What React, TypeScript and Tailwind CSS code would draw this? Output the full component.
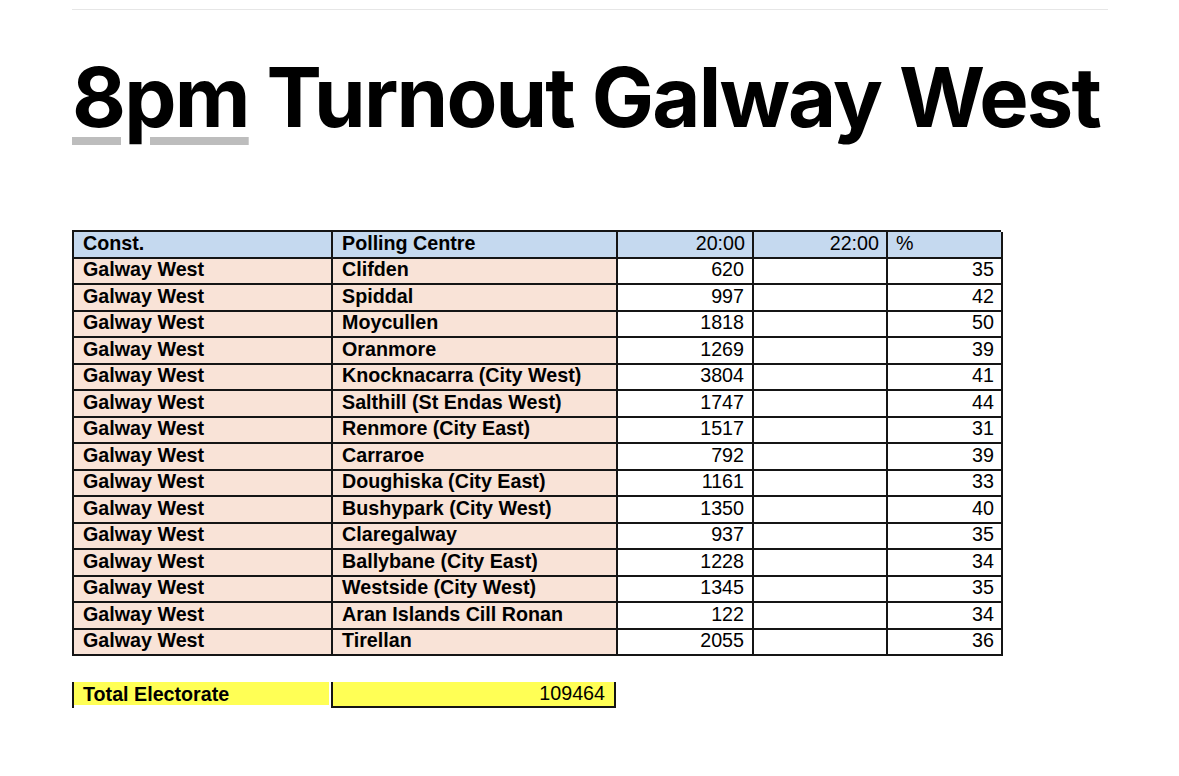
import React from "react";

const rows: [string, string, string, string][] = [
  ["Galway West", "Clifden", "620", "35"],
  ["Galway West", "Spiddal", "997", "42"],
  ["Galway West", "Moycullen", "1818", "50"],
  ["Galway West", "Oranmore", "1269", "39"],
  ["Galway West", "Knocknacarra (City West)", "3804", "41"],
  ["Galway West", "Salthill (St Endas West)", "1747", "44"],
  ["Galway West", "Renmore (City East)", "1517", "31"],
  ["Galway West", "Carraroe", "792", "39"],
  ["Galway West", "Doughiska (City East)", "1161", "33"],
  ["Galway West", "Bushypark (City West)", "1350", "40"],
  ["Galway West", "Claregalway", "937", "35"],
  ["Galway West", "Ballybane (City East)", "1228", "34"],
  ["Galway West", "Westside (City West)", "1345", "35"],
  ["Galway West", "Aran Islands Cill Ronan", "122", "34"],
  ["Galway West", "Tirellan", "2055", "36"],
];

const cell =
  "h-[26.5px] border-r-2 border-b-2 border-[#151515] flex items-center pb-[1.5px] leading-none";

export default function App() {
  return (
    <div className="w-[1179px] h-[776px] bg-white overflow-hidden pl-[72px] text-black">
      <div className="pt-[9px]">
        <div className="w-[1036px] h-px bg-[#e6e6e6]" />
      </div>
      <h1
        className="mt-[46px] text-[83px] leading-none font-bold tracking-[-1.8px] whitespace-nowrap"
        style={{ fontFamily: "Inter, 'Noto Sans', sans-serif" }}
      >
        <span className="underline decoration-[#bdbdbd] decoration-[8px] underline-offset-[10px]">
          8pm
        </span>{" "}
        Turnout Galway West
      </h1>
      <div
        className="mt-[91px] text-[19.7px]"
        style={{ fontFamily: "'Liberation Sans', Arial, sans-serif" }}
      >
        <div className="grid grid-cols-[259px_285px_136px_134px_115px] border-l-2 border-t-2 border-[#151515] w-[929px]">
          <div className={`${cell} bg-[#c5d9ef] font-bold pl-[9px]`}>Const.</div>
          <div className={`${cell} bg-[#c5d9ef] font-bold pl-[9px]`}>Polling Centre</div>
          <div className={`${cell} bg-[#c5d9ef] justify-end pr-[7px]`}>20:00</div>
          <div className={`${cell} bg-[#c5d9ef] justify-end pr-[7px]`}>22:00</div>
          <div className={`${cell} bg-[#c5d9ef] pl-[8px]`}>%</div>
          {rows.map((r, i) => (
            <React.Fragment key={i}>
              <div className={`${cell} bg-[#f9e3d7] font-bold pl-[9px]`}>{r[0]}</div>
              <div className={`${cell} bg-[#f9e3d7] font-bold pl-[9px]`}>{r[1]}</div>
              <div className={`${cell} justify-end pr-[8px]`}>{r[2]}</div>
              <div className={`${cell}`}></div>
              <div className={`${cell} justify-end pr-[7px]`}>{r[3]}</div>
            </React.Fragment>
          ))}
        </div>
        <div className="mt-[26px] flex h-[26px] w-[544px]">
          <div className="w-[259px] border-l-2 border-[#151515] flex">
            <div className="w-[255px] h-[23px] bg-[#ffff55] flex items-center pl-[9px] font-bold leading-none pt-[2px]">
              Total Electorate
            </div>
          </div>
          <div className="w-[285px] h-[26px] border-l-2 border-r-2 border-b-2 border-[#151515] bg-[#ffff55] flex items-center justify-end pr-[9px] leading-none pb-[1px]">
            109464
          </div>
        </div>
      </div>
    </div>
  );
}
